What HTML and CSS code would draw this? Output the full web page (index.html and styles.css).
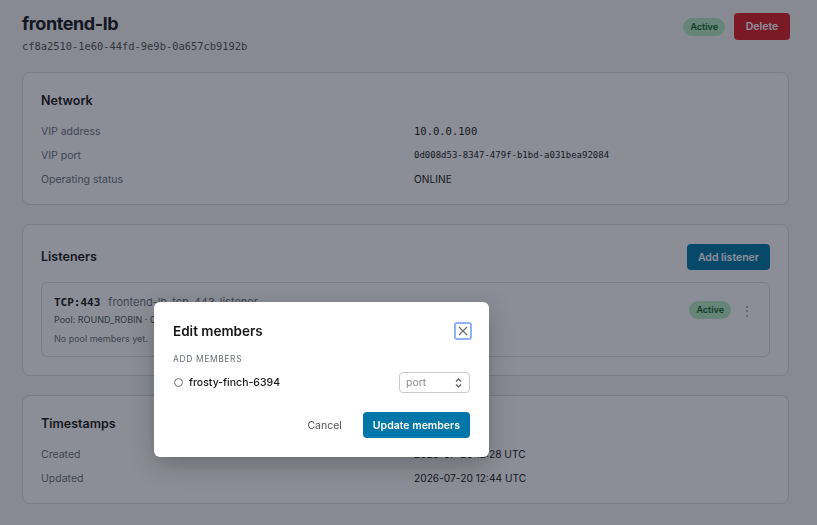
FILE: index.html
```html
<!DOCTYPE html>
<html lang="en">
<head>
    <meta charset="UTF-8">
    <meta name="viewport" content="width=device-width, initial-scale=1.0">
    <title>frontend-lb · Load balancer</title>
    <link rel="stylesheet" href="styles.css">
</head>
<body>
    <div class="page">
        <div class="header">
            <div>
                <h1>frontend-lb</h1>
                <div class="lb-id">cf8a2510-1e60-44fd-9e9b-0a657cb9192b</div>
            </div>
            <div class="header-actions">
                <span class="badge">Active</span>
                <button class="btn btn-danger">Delete</button>
            </div>
        </div>

        <div class="card">
            <h2>Network</h2>
            <div class="rows">
                <div class="row"><span class="label">VIP address</span><span class="value mono">10.0.0.100</span></div>
                <div class="row"><span class="label">VIP port</span><span class="value mono small">0d008d53-8347-479f-b1bd-a031bea92084</span></div>
                <div class="row"><span class="label">Operating status</span><span class="value">ONLINE</span></div>
            </div>
        </div>

        <div class="card card-listeners">
            <div class="card-head">
                <h2>Listeners</h2>
                <button class="btn btn-primary">Add listener</button>
            </div>
            <div class="listener">
                <div class="listener-info">
                    <div class="listener-title">
                        <span class="proto">TCP:443</span>
                        <span class="listener-name">frontend-lb-tcp-443-listener</span>
                    </div>
                    <div class="listener-meta">Pool: ROUND_ROBIN · 0 members</div>
                    <div class="listener-meta empty">No pool members yet.</div>
                </div>
                <div class="listener-actions">
                    <span class="badge">Active</span>
                    <span class="kebab">⋮</span>
                </div>
            </div>
        </div>

        <div class="card">
            <h2>Timestamps</h2>
            <div class="rows">
                <div class="row"><span class="label">Created</span><span class="value">2026-07-20 12:28 UTC</span></div>
                <div class="row"><span class="label">Updated</span><span class="value">2026-07-20 12:44 UTC</span></div>
            </div>
        </div>
    </div>

    <div class="overlay"></div>

    <div class="modal">
        <div class="modal-head">
            <h3>Edit members</h3>
            <button class="close-btn">
                <svg width="10" height="10" viewBox="0 0 10 10"><path d="M1 1 L9 9 M9 1 L1 9" stroke="#6f6f6f" stroke-width="1.2" fill="none"/></svg>
            </button>
        </div>
        <div class="section-label">ADD MEMBERS</div>
        <div class="member">
            <label class="member-name"><span class="radio"></span>frosty-finch-6394</label>
            <div class="port-input">
                <span>port</span>
                <svg width="9" height="12" viewBox="0 0 9 12"><path d="M2 4.5 L4.5 2 L7 4.5 M2 7.5 L4.5 10 L7 7.5" stroke="#555" stroke-width="1.1" fill="none"/></svg>
            </div>
        </div>
        <div class="modal-foot">
            <button class="btn btn-ghost">Cancel</button>
            <button class="btn btn-primary">Update members</button>
        </div>
    </div>
</body>
</html>
```

FILE: styles.css
```css
* {
    margin: 0;
    padding: 0;
    box-sizing: border-box;
}

body {
    font-family: 'Inter', 'Noto Sans', sans-serif;
    background-color: #f3f4f6;
    color: #161616;
    height: 100vh;
    overflow: hidden;
}

.mono {
    font-family: 'DejaVu Sans Mono', 'Liberation Mono', monospace;
}

.page {
    padding: 12px 28px 0 22px;
}

.header {
    display: flex;
    justify-content: space-between;
    align-items: flex-start;
    height: 60px;
    margin-right: -1px;
}

h1 {
    font-size: 18px;
    font-weight: 700;
    line-height: 24px;
    letter-spacing: -0.4px;
}

.lb-id {
    font-family: 'DejaVu Sans Mono', 'Liberation Mono', monospace;
    font-size: 10.4px;
    color: #525252;
    margin-top: 4px;
}

.header-actions {
    display: flex;
    align-items: center;
    gap: 9px;
    padding-top: 1px;
}

.badge {
    display: inline-block;
    background-color: #b4e8c2;
    color: #0e6027;
    font-size: 9px;
    font-weight: 600;
    padding: 0 7px;
    line-height: 18px;
    border-radius: 9px;
}

.btn {
    border: none;
    border-radius: 4px;
    font-family: inherit;
    font-size: 10.5px;
    font-weight: 600;
    height: 26px;
    padding: 0 11px;
    cursor: pointer;
}

.btn-danger {
    background-color: #da1e28;
    color: #fff;
    height: 27px;
    width: 56px;
}

.btn-primary {
    background-color: #0077a8;
    color: #fff;
}

.btn-ghost {
    background: none;
    color: #525252;
    font-weight: 400;
}

.card {
    background-color: #fcfcfd;
    border: 1px solid #d6d9de;
    border-radius: 8px;
    padding: 19px 18px 13px;
    margin-bottom: 19px;
}

.card-listeners {
    padding-bottom: 18px;
}

.card h2 {
    font-size: 12.5px;
    font-weight: 600;
    line-height: 18px;
    margin-bottom: 9px;
}

.row {
    display: grid;
    grid-template-columns: 1fr 1fr;
    column-gap: 17px;
    height: 24px;
    align-items: center;
}

.label {
    font-size: 10.5px;
    color: #6b7079;
}

.value {
    font-size: 10.2px;
    color: #161616;
}

.value.mono {
    font-size: 10.5px;
}

.value.small {
    font-size: 9px;
}

.card-head {
    display: flex;
    justify-content: space-between;
    align-items: center;
    margin-bottom: 12px;
}

.card-head h2 {
    margin-bottom: 0;
}

.listener {
    display: flex;
    justify-content: space-between;
    border: 1px solid #d6d9de;
    border-radius: 6px;
    padding: 11px 16px 11px 12px;
}

.listener-title {
    display: flex;
    align-items: baseline;
    gap: 8px;
    line-height: 16px;
}

.proto {
    font-family: 'DejaVu Sans Mono', 'Liberation Mono', monospace;
    font-weight: 700;
    font-size: 11px;
}

.listener-name {
    font-size: 11px;
    color: #6b7079;
}

.listener-meta {
    font-size: 9px;
    color: #525252;
    line-height: 12px;
    margin-top: 3px;
}

.listener-meta.empty {
    color: #6b7079;
    margin-top: 7px;
}

.listener-actions {
    display: flex;
    align-items: center;
    gap: 10px;
    margin-top: 7px;
    height: 18px;
}

.kebab {
    color: #8d8d8d;
    font-size: 12px;
}

.overlay {
    position: fixed;
    inset: 0;
    background-color: rgba(17, 24, 39, 0.48);
}

.modal {
    position: fixed;
    left: 154px;
    top: 302px;
    width: 335px;
    background-color: #fff;
    border-radius: 6px;
    box-shadow: 0 8px 24px rgba(0, 0, 0, 0.25);
    padding: 20px 19px 19px;
}

.modal-head {
    display: flex;
    justify-content: space-between;
    align-items: center;
    height: 18px;
}

.modal-head h3 {
    font-size: 13.5px;
    font-weight: 600;
}

.close-btn {
    width: 18px;
    height: 18px;
    margin-right: -2px;
    background: #fff;
    border: 2px solid #8fb3f5;
    border-radius: 3px;
    display: flex;
    align-items: center;
    justify-content: center;
    cursor: pointer;
}

.section-label {
    font-size: 8.5px;
    letter-spacing: 0.6px;
    color: #6b7079;
    line-height: 10px;
    margin-top: 14px;
}

.member {
    display: flex;
    justify-content: space-between;
    align-items: center;
    margin-top: 8px;
}

.member-name {
    display: flex;
    align-items: center;
    gap: 6px;
    font-size: 10.5px;
    font-weight: 500;
}

.radio {
    width: 9px;
    height: 9px;
    border: 1px solid #6f6f6f;
    border-radius: 50%;
    margin-left: 1px;
}

.port-input {
    width: 71px;
    height: 21px;
    border: 1px solid #c6c9ce;
    border-radius: 4px;
    display: flex;
    align-items: center;
    justify-content: space-between;
    padding: 0 6px;
    font-size: 10.5px;
    color: #8d8d8d;
}

.modal-foot {
    display: flex;
    justify-content: flex-end;
    align-items: center;
    gap: 10px;
    margin-top: 19px;
}

.modal-foot .btn-primary {
    padding: 0 10px;
}
```
